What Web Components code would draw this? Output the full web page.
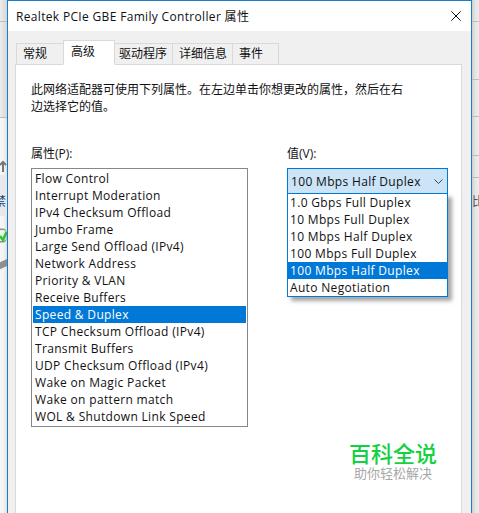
<!DOCTYPE html>
<html lang="zh">
<head>
<meta charset="utf-8">
<title>属性</title>
<style>
  html, body { margin: 0; padding: 0; background: #f0f0f0; }
  body {
    font: 12px/17px "Open Sans", "Noto Sans CJK SC", sans-serif;
    color: #111;
  }
</style>
</head>
<body>
<desktop-back>
  <prop-dialog heading="Realtek PCIe GBE Family Controller 属性">
    <tab-strip>
      <tab-item style="--w:48px;--pad:6px">常规</tab-item>
      <tab-item active style="--w:52px;--pad:7px">高级</tab-item>
      <tab-item style="--w:59px;--pad:4px">驱动程序</tab-item>
      <tab-item style="--w:61px;--pad:6px">详细信息</tab-item>
      <tab-item style="--w:47px;--pad:6px">事件</tab-item>
    </tab-strip>
    <tab-panel>
      <p slot="intro">此网络适配器可使用下列属性。在左边单击你想更改的属性&#xFF0C;然后在右<br>边选择它的值。</p>
      <field-column slot="left" label="属性(P):">
        <list-box>
          <list-row>Flow Control</list-row>
          <list-row>Interrupt Moderation</list-row>
          <list-row>IPv4 Checksum Offload</list-row>
          <list-row>Jumbo Frame</list-row>
          <list-row>Large Send Offload (IPv4)</list-row>
          <list-row>Network Address</list-row>
          <list-row>Priority &amp; VLAN</list-row>
          <list-row>Receive Buffers</list-row>
          <list-row selected>Speed &amp; Duplex</list-row>
          <list-row>TCP Checksum Offload (IPv4)</list-row>
          <list-row>Transmit Buffers</list-row>
          <list-row>UDP Checksum Offload (IPv4)</list-row>
          <list-row>Wake on Magic Packet</list-row>
          <list-row>Wake on pattern match</list-row>
          <list-row>WOL &amp; Shutdown Link Speed</list-row>
        </list-box>
      </field-column>
      <field-column slot="right" label="值(V):">
        <combo-box value="100 Mbps Half Duplex">
          <list-row>1.0 Gbps Full Duplex</list-row>
          <list-row>10 Mbps Full Duplex</list-row>
          <list-row>10 Mbps Half Duplex</list-row>
          <list-row>100 Mbps Full Duplex</list-row>
          <list-row selected>100 Mbps Half Duplex</list-row>
          <list-row>Auto Negotiation</list-row>
        </combo-box>
      </field-column>
      <brand-mark slot="mark"></brand-mark>
    </tab-panel>
  </prop-dialog>
</desktop-back>

<script>
class DesktopBack extends HTMLElement {
  constructor() {
    super();
    this.attachShadow({ mode: "open" });
    this.shadowRoot.innerHTML = `
    <style>
      :host {
        display: block;
        position: relative;
        width: 479px;
        height: 513px;
        overflow: hidden;
        background: #f0f0f0;
      }
      .scrap { position: absolute; }
      .left { left: 0; top: 0; width: 7px; height: 513px; background: linear-gradient(90deg, #f6f6f6, #f2f2f2 60%, #dedede); }
      .left-top { left: 0; top: 0; width: 7px; height: 118px; background: linear-gradient(90deg, #ececec, #d6d6d6); border-bottom: 1px solid #bdbdbd; box-sizing: border-box; }
      .band { left: 0; top: 175px; width: 7px; height: 41px; background: #e6e8ec; }
      .arrow { left: 0; top: 160px; }
      .char { left: -6px; top: 193px; color: #1c3f78; font-size: 12px; }
      .check { left: -6px; top: 228px; }
      .drive { left: -6px; top: 258px; }
      .right { left: 472px; top: 0; width: 7px; height: 513px; background: linear-gradient(90deg, #cfcfcf, #e6e6e6 50%, #ececec); }
      .rule { width: 7px; height: 1px; background: #bdbdbd; }
      .r-char { left: 472px; top: 193px; color: #555; font-size: 12px; width: 7px; overflow: hidden; }
    </style>
    <div class="scrap left"></div>
    <div class="scrap left-top"></div>
    <div class="scrap rule" style="left:0;top:21px"></div>
    <div class="scrap band"></div>
    <svg class="scrap arrow" width="7" height="12" viewBox="0 0 7 12"><path d="M3 12V2M0 5l3-3 3 3" fill="none" stroke="#777" stroke-width="2"/></svg>
    <div class="scrap char">禁</div>
    <svg class="scrap check" width="13" height="15" viewBox="0 0 13 15"><rect x=".5" y=".5" width="12" height="14" rx="4" fill="#8f8f8f"/><rect x="2" y="2" width="10" height="11" rx="3" fill="#e8f6e8"/><path d="M6 8l3 4 3.500-8" fill="none" stroke="#34c234" stroke-width="2.600"/></svg>
    <svg class="scrap drive" width="13" height="14" viewBox="0 0 13 14"><path d="M0 7l13-6v7L0 14z" fill="#8f8f8f"/></svg>
    <div class="scrap right"></div>
    <div class="scrap rule" style="left:472px;top:21px"></div>
    <div class="scrap rule" style="left:472px;top:79px"></div>
    <div class="scrap rule" style="left:472px;top:116px"></div>
    <div class="scrap rule" style="left:472px;top:155px"></div>
    <div class="scrap rule" style="left:472px;top:177px"></div>
    <div class="scrap r-char">比</div>
    <slot></slot>`;
  }
}

class PropDialog extends HTMLElement {
  constructor() {
    super();
    this.attachShadow({ mode: "open" });
    this.shadowRoot.innerHTML = `
    <style>
      :host {
        display: flex;
        flex-direction: column;
        position: absolute;
        left: 7px;
        top: 0;
        width: 465px;
        height: 513px;
        box-sizing: border-box;
        border: 1px solid #1b7cc9;
        border-bottom: 0;
        background: #f0f0f0;
      }
      .title {
        display: flex;
        align-items: center;
        justify-content: space-between;
        height: 30px;
        padding: 0 10px 0 8px;
        background: #fff;
      }
      .text { letter-spacing: .33px; }
      .close { display: block; }
      .body {
        flex: 1;
        display: flex;
        flex-direction: column;
        padding: 9px 9px 0 7px;
        min-height: 0;
      }
    </style>
    <div class="title">
      <span class="text"></span>
      <svg class="close" width="10" height="10" viewBox="0 0 10 10"><path d="M.3.3l9.4 9.4M9.7.3L.3 9.7" stroke="#111" fill="none"/></svg>
    </div>
    <div class="body"><slot></slot></div>`;
    this.shadowRoot.querySelector(".text").textContent = this.getAttribute("heading");
  }
}

class TabStrip extends HTMLElement {
  constructor() {
    super();
    this.attachShadow({ mode: "open" });
    this.shadowRoot.innerHTML = `
    <style>
      :host { display: flex; align-items: flex-end; height: 25px; margin: 0 0 -1px 1px; position: relative; z-index: 1; }
    </style>
    <slot></slot>`;
  }
}

class TabItem extends HTMLElement {
  constructor() {
    super();
    this.attachShadow({ mode: "open" });
    this.shadowRoot.innerHTML = `
    <style>
      :host {
        display: block;
        box-sizing: border-box;
        width: var(--w);
        height: 22px;
        padding: 1px 0 0 var(--pad);
        margin-left: -1px;
        border: 1px solid #d9d9d9;
        background: #f0f0f0;
        line-height: 18px;
        white-space: nowrap;
      }
      :host(:first-child) { margin-left: 0; }
      :host([active]) {
        height: 25px;
        padding-top: 2px;
        background: #fff;
        border-bottom-color: #fff;
        position: relative;
        z-index: 1;
      }
    </style>
    <slot></slot>`;
  }
}

class TabPanel extends HTMLElement {
  constructor() {
    super();
    this.attachShadow({ mode: "open" });
    this.shadowRoot.innerHTML = `
    <style>
      :host {
        display: block;
        position: relative;
        flex: 1;
        box-sizing: border-box;
        background: #fff;
        border: 1px solid #d9d9d9;
        border-bottom: 0;
        padding: 16px 15px 0 15px;
      }
      .cols { display: flex; gap: 39px; margin-top: 30px; }
      ::slotted(p) { margin: 0; }
    </style>
    <slot name="intro"></slot>
    <div class="cols">
      <slot name="left"></slot>
      <slot name="right"></slot>
    </div>
    <slot name="mark"></slot>`;
  }
}

class FieldColumn extends HTMLElement {
  constructor() {
    super();
    this.attachShadow({ mode: "open" });
    this.shadowRoot.innerHTML = `
    <style>
      :host { display: block; }
      .label { display: block; height: 17px; margin-bottom: 6px; }
    </style>
    <span class="label"></span>
    <slot></slot>`;
    this.shadowRoot.querySelector(".label").textContent = this.getAttribute("label");
  }
}

class ListBox extends HTMLElement {
  constructor() {
    super();
    this.attachShadow({ mode: "open" });
    this.shadowRoot.innerHTML = `
    <style>
      :host {
        display: block;
        box-sizing: border-box;
        width: 217px;
        padding: 1px;
        border: 1px solid #828790;
        background: #fff;
      }
    </style>
    <slot></slot>`;
  }
}

class ListRow extends HTMLElement {
  constructor() {
    super();
    this.attachShadow({ mode: "open" });
    this.shadowRoot.innerHTML = `
    <style>
      :host {
        display: block;
        height: 17px;
        padding-left: 2px;
        line-height: 17px;
        letter-spacing: .33px;
        white-space: nowrap;
      }
      :host([selected]) { background: #0078d7; color: #fff; }
    </style>
    <slot></slot>`;
  }
}

class ComboBox extends HTMLElement {
  constructor() {
    super();
    this.attachShadow({ mode: "open" });
    this.shadowRoot.innerHTML = `
    <style>
      :host { display: block; position: relative; width: 161px; }
      .field {
        display: flex;
        align-items: center;
        justify-content: space-between;
        box-sizing: border-box;
        height: 26px;
        padding: 0 4px 0 3px;
        border: 1px solid #0078d7;
        background: #cce4f7;
        letter-spacing: .33px;
      }
      .drop {
        position: absolute;
        left: 0;
        top: 25px;
        width: 161px;
        box-sizing: border-box;
        border: 1px solid #0078d7;
        background: #fff;
        box-shadow: 4px 4px 4px rgba(0, 0, 0, .35);
      }
    </style>
    <div class="field">
      <span class="value"></span>
      <svg width="9" height="5" viewBox="0 0 9 5"><path d="M.5.500L4.500 4.500 8.500.500" fill="none" stroke="#444"/></svg>
    </div>
    <div class="drop"><slot></slot></div>`;
    this.shadowRoot.querySelector(".value").textContent = this.getAttribute("value");
  }
}

class BrandMark extends HTMLElement {
  constructor() {
    super();
    this.attachShadow({ mode: "open" });
    this.shadowRoot.innerHTML = `
    <style>
      :host {
        display: block;
        position: absolute;
        left: 333px;
        top: 374px;
        width: 88px;
        text-align: center;
        font-family: "Noto Sans CJK SC", sans-serif;
      }
      .big { display: block; font-size: 22px; line-height: 26px; font-weight: 500; color: #14d142; }
      .small { display: block; font-size: 13px; line-height: 16px; color: #a8a8a8; }
    </style>
    <span class="big">百科全说</span>
    <span class="small">助你轻松解决</span>`;
  }
}

customElements.define("desktop-back", DesktopBack);
customElements.define("prop-dialog", PropDialog);
customElements.define("tab-strip", TabStrip);
customElements.define("tab-item", TabItem);
customElements.define("tab-panel", TabPanel);
customElements.define("field-column", FieldColumn);
customElements.define("list-box", ListBox);
customElements.define("list-row", ListRow);
customElements.define("combo-box", ComboBox);
customElements.define("brand-mark", BrandMark);
</script>
</body>
</html>
